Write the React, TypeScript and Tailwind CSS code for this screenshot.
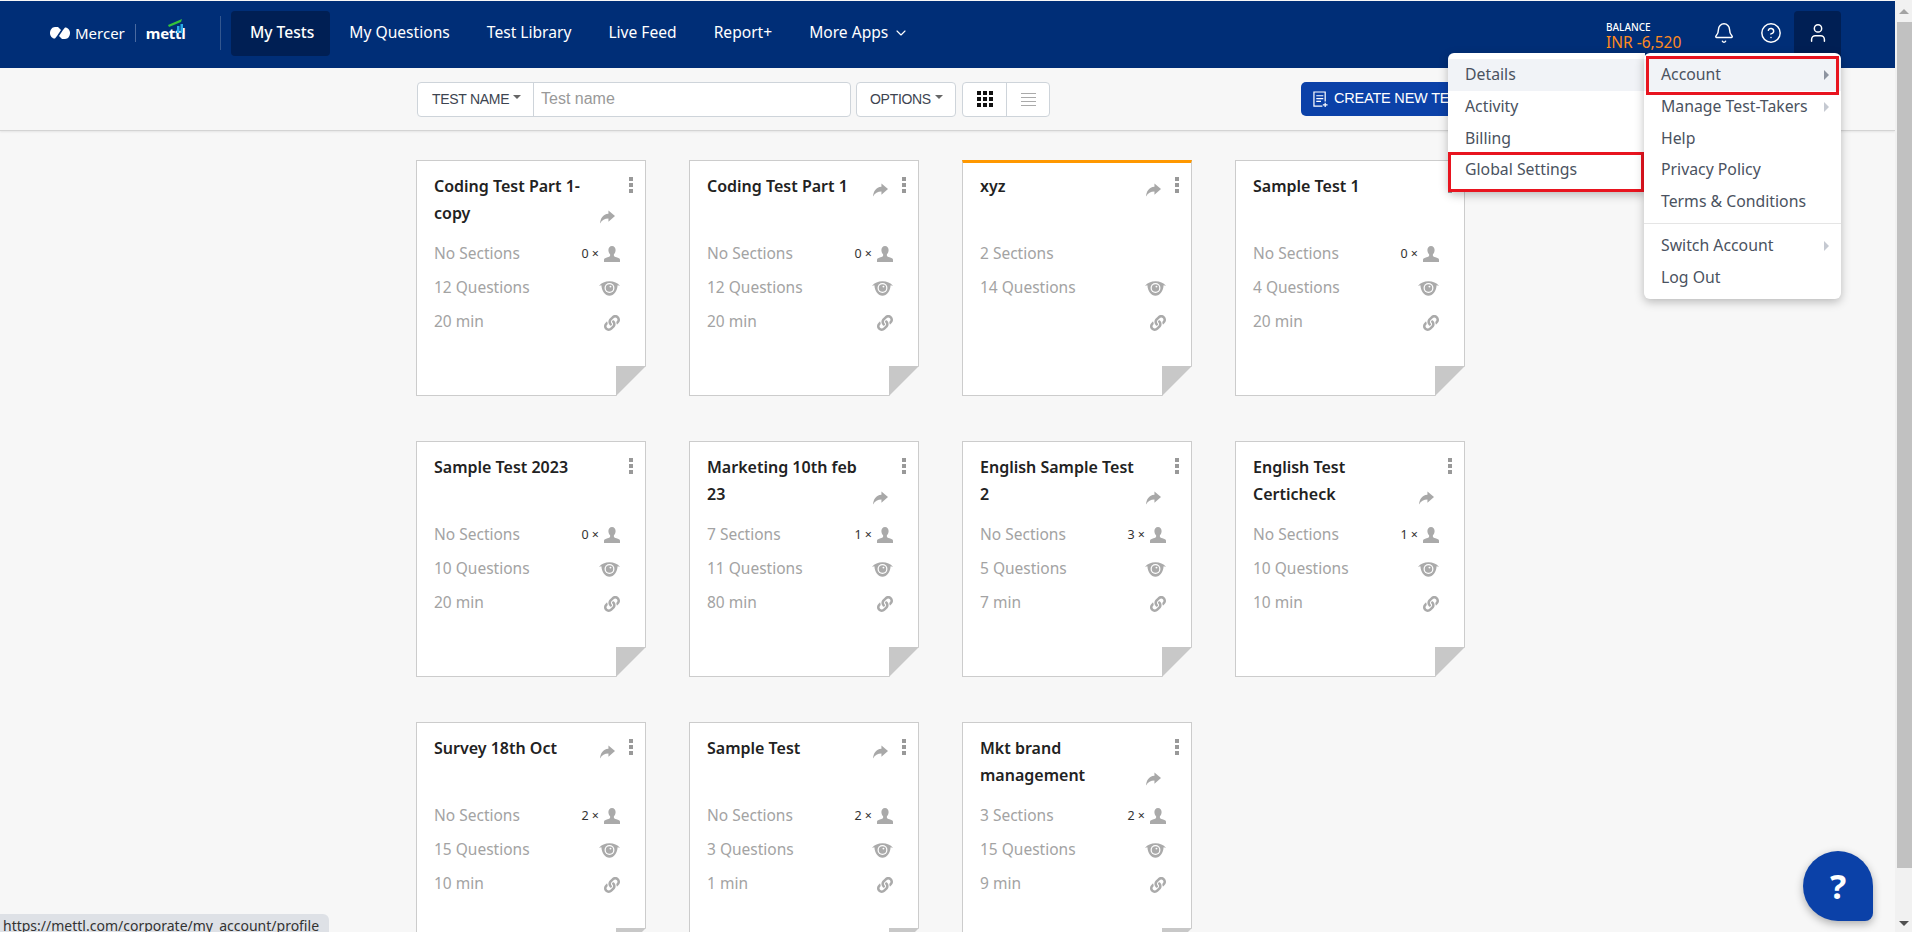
import { Bell, ChevronDown, CircleHelp, User } from "lucide-react";
import { FaLink } from "react-icons/fa";

interface TestCard {
  title: string;
  sections: string;
  takers?: number;
  questions: number;
  mins?: number;
  shared?: boolean;
  draft?: boolean;
}

const tests: TestCard[] = [
  { title: "Coding Test Part 1-copy", sections: "No Sections", takers: 0, questions: 12, mins: 20, shared: true },
  { title: "Coding Test Part 1", sections: "No Sections", takers: 0, questions: 12, mins: 20, shared: true },
  { title: "xyz", sections: "2 Sections", questions: 14, shared: true, draft: true },
  { title: "Sample Test 1", sections: "No Sections", takers: 0, questions: 4, mins: 20 },
  { title: "Sample Test 2023", sections: "No Sections", takers: 0, questions: 10, mins: 20 },
  { title: "Marketing 10th feb 23", sections: "7 Sections", takers: 1, questions: 11, mins: 80, shared: true },
  { title: "English Sample Test 2", sections: "No Sections", takers: 3, questions: 5, mins: 7, shared: true },
  { title: "English Test Certicheck", sections: "No Sections", takers: 1, questions: 10, mins: 10, shared: true },
  { title: "Survey 18th Oct", sections: "No Sections", takers: 2, questions: 15, mins: 10, shared: true },
  { title: "Sample Test", sections: "No Sections", takers: 2, questions: 3, mins: 1, shared: true },
  { title: "Mkt brand management", sections: "3 Sections", takers: 2, questions: 15, mins: 9, shared: true },
];

const navLinks = ["My Questions", "Test Library", "Live Feed", "Report+"];

function ShareIcon() {
  return (
    <svg viewBox="0 0 16 14" className="w-[15px] h-[14px] mb-[3px] fill-[#a8a8a8]">
      <path d="M9 0 16 6 9 12V8.500C5 8.500 2 10 0 14 .5 8.500 3 4 9 3.500Z" />
    </svg>
  );
}

function PersonIcon() {
  return (
    <svg viewBox="0 0 16 16" className="w-4 h-4 fill-[#aaaaaa]">
      <path d="M8 0c2.200 0 3.600 1.700 3.600 4 0 1.700-.7 3.300-1.700 4.200v1.500c0 .6 1 1 2.600 1.600 1.800.7 3.500 1.200 3.500 2.400V16H0v-2.300c0-1.200 1.700-1.700 3.500-2.400 1.600-.6 2.600-1 2.600-1.600V8.200C5.100 7.300 4.400 5.700 4.400 4c0-2.300 1.400-4 3.600-4Z" />
    </svg>
  );
}

function EyeIcon() {
  return (
    <svg viewBox="0 0 22 15" className="w-[21px] h-[15px] fill-[#aaaaaa]">
      <path d="M0 5C2.500 1.500 6.500 0 11 0s8.500 1.500 11 5c-1.300-.8-2-.9-2.500-.9C19 10.500 15.500 15 11 15S3 10.500 2.500 4.100C2 4.100 1.300 4.200 0 5Z" />
      <circle cx="11" cy="7" r="5.200" fill="#ffffff" />
      <circle cx="11" cy="7" r="3.900" />
      <circle cx="12" cy="5.500" r="1" fill="#ffffff" />
    </svg>
  );
}

function Card({ test }: { test: TestCard }) {
  return (
    <div
      className={`relative w-[230px] h-[236px] bg-white border border-[#cccccc] pl-[17px] pr-[12px] ${
        test.draft ? "border-t-[3px] border-t-[#ff9800] pt-[10px]" : "pt-[12px]"
      }`}
    >
      <div className="flex items-start h-[55px]">
        <div className="flex items-end w-[199px]">
          <div className="w-[166px] text-[16px] leading-[27px] font-semibold text-[#222222]">{test.title}</div>
          {test.shared && <ShareIcon />}
        </div>
        <div className="flex flex-col gap-[2px] mt-[4px] ml-auto">
          <span className="w-[4px] h-[4px] bg-[#999999]" />
          <span className="w-[4px] h-[4px] bg-[#999999]" />
          <span className="w-[4px] h-[4px] bg-[#999999]" />
        </div>
      </div>
      <div className="mt-[9px] w-[186px] text-[15.5px] text-[#a3a3a3]">
        <div className="flex items-center justify-between h-[34px]">
          <span>{test.sections}</span>
          {test.takers !== undefined && (
            <span className="flex items-center text-[12.5px] text-[#333333]">
              {test.takers} ×<span className="ml-[5px]"><PersonIcon /></span>
            </span>
          )}
        </div>
        <div className="flex items-center justify-between h-[34px]">
          <span>{test.questions} Questions</span>
          <EyeIcon />
        </div>
        <div className="flex items-center justify-between h-[34px]">
          <span>{test.mins !== undefined ? `${test.mins} min` : ""}</span>
          <FaLink className="w-4 h-4 mt-[1px] text-[#aaaaaa]" />
        </div>
      </div>
      <svg viewBox="0 0 30 30" className="absolute right-[-1px] bottom-[-1px] w-[30px] h-[30px]">
        <path d="M0 30 30 0V30Z" fill="#f7f7f7" />
        <path d="M0 0H30L0 30Z" fill="#c8c8c8" />
      </svg>
    </div>
  );
}

function MenuItem({ label, arrow, active }: { label: string; arrow?: boolean; active?: boolean }) {
  return (
    <div
      className={`flex items-center justify-between h-[31.6px] pt-px pl-[17px] pr-[12px] text-[15.8px] text-[#4a5260] ${
        active ? "bg-[#f1f3f7]" : ""
      }`}
    >
      <span>{label}</span>
      {arrow && (
        <span className={`w-0 h-0 border-y-[5px] border-y-transparent border-l-[5px] ${active ? "border-l-[#8d93a0]" : "border-l-[#c5c9d1]"}`} />
      )}
    </div>
  );
}

export default function App() {
  return (
    <div className="relative flex h-[932px] overflow-hidden bg-[#f7f7f7] [font-family:Noto_Sans,sans-serif]">
      <div className="flex-1 min-w-0">
        <header className="flex items-center h-[67px] mt-[1px] pb-[3px] bg-[#002e77] text-white">
          <div className="flex items-center w-[220px] pl-[50px]">
            <svg viewBox="0 0 20 12" className="w-[20px] h-[12px] fill-white">
              <path d="M5 0h3l3 3-4 6-2 2.600C2 11.600 0 9 0 6s2-6 5-6Z" />
              <path d="M15 12h-3L9 9l4-6 2-2.600c3 0 5 2.600 5 5.600s-2 6-5 6Z" />
            </svg>
            <span className="ml-[5px] text-[15px]">Mercer</span>
            <span className="w-px h-[18px] bg-[#4a6aa0] mx-[10px]" />
            <div className="relative">
              <span className="text-[15px] font-bold tracking-[-0.3px]">mettl</span>
              <svg viewBox="0 0 18 18" className="absolute right-[0px] top-[-5px] w-[18px] h-[18px]">
                <path d="M10 10h2.500v7H10zM13.500 8H16v9h-2.500z" fill="#29a9e8" />
                <path d="M1 9 15 3l-1 3L2 11Z" fill="#35c23a" />
              </svg>
            </div>
          </div>
          <span className="w-px h-[34px] bg-[#33578f]" />
          <nav className="flex items-center ml-[10px] text-[15.6px]">
            <a className="flex items-center h-[45px] pl-[19px] pr-[16px] rounded-[4px] bg-[#001f54] font-medium">My Tests</a>
            {navLinks.map((l) => (
              <a key={l} className="flex items-center h-[45px] px-[18px] ml-px">
                {l}
              </a>
            ))}
            <a className="flex items-center h-[45px] px-[18px] ml-px">
              More Apps
              <ChevronDown className="w-[16px] h-[16px] ml-[5px]" strokeWidth={1.700} />
            </a>
          </nav>
          <div className="ml-auto flex items-center pr-[54px]">
            <div className="w-[94px] mt-[6px]">
              <div className="text-[10px] leading-[11px] font-medium">BALANCE</div>
              <div className="text-[15.5px] leading-[16px] mt-[1px] text-[#ff8a1e]">INR -6,520</div>
            </div>
            <div className="w-[47px] flex justify-center"><Bell className="w-[22px] h-[22px]" strokeWidth={1.600} /></div>
            <div className="w-[47px] flex justify-center"><CircleHelp className="w-[22px] h-[22px]" strokeWidth={1.600} /></div>
            <div className="flex items-center justify-center w-[47px] h-[45px] rounded-t-[4px] bg-[#001f54]">
              <User className="w-[22px] h-[22px]" strokeWidth={1.600} />
            </div>
          </div>
        </header>
        <div className="flex items-center h-[63px] pl-[417px] bg-[#f7f7f7] border-b border-[#d4d4d4] shadow-[0_1px_2px_rgba(0,0,0,0.08)] [font-family:Liberation_Sans,Arial,sans-serif] text-[14px] text-[#3d4450]">
          <div className="flex w-[434px] h-[35px] bg-white border border-[#ced4da] rounded-[4px]">
            <div className="flex items-center w-[116px] pl-[14px] border-r border-[#ced4da] tracking-[-0.3px]">
              TEST NAME
              <span className="ml-[4px] mb-[4px] border-x-[4px] border-x-transparent border-t-[4px] border-t-[#666666]" />
            </div>
            <input placeholder="Test name" className="flex-1 min-w-0 pl-[7px] text-[16px] outline-none placeholder:text-[#999999]" />
          </div>
          <div className="flex items-center w-[100px] h-[35px] ml-[5px] pl-[13px] bg-white border border-[#ced4da] rounded-[4px] tracking-[-0.3px]">
            OPTIONS
            <span className="ml-[4px] mb-[4px] border-x-[4px] border-x-transparent border-t-[4px] border-t-[#666666]" />
          </div>
          <div className="flex w-[88px] h-[35px] ml-[6px] bg-white border border-[#ced4da] rounded-[4px]">
            <div className="flex items-center justify-center w-[44px] border-r border-[#ced4da]">
              <div className="grid grid-cols-3 gap-[2px]">
                {Array.from({ length: 9 }).map((_, i) => (
                  <span key={i} className="w-[4px] h-[4px] bg-[#111111]" />
                ))}
              </div>
            </div>
            <div className="flex flex-1 flex-col items-center justify-center gap-[3px]">
              {Array.from({ length: 4 }).map((_, i) => (
                <span key={i} className="w-[15px] h-px bg-[#aaaaaa]" />
              ))}
            </div>
          </div>
          <button className="flex items-center h-[34px] w-[170px] ml-[251px] pl-[12px] bg-[#0b41a8] text-white rounded-[5px] text-[14.5px] tracking-[-0.2px] whitespace-nowrap">
            <svg viewBox="0 0 16 18" className="w-[15px] h-[17px] mr-[6px] fill-none stroke-white stroke-[1.300]">
              <path d="M10 16H1V1h12v10" />
              <path d="M3.500 5h7.500M3.500 8h7.500M3.500 11h5M13 12.500v4.500M10.500 14.800h5" />
            </svg>
            CREATE NEW TEST
          </button>
        </div>
        <main className="grid grid-cols-[repeat(4,230px)] gap-x-[43px] gap-y-[45px] pt-[29px] pl-[416px]">
          {tests.map((t) => (
            <Card key={t.title} test={t} />
          ))}
        </main>
      </div>

      {/* scrollbar */}
      <div className="flex flex-col w-[17px] bg-[#f1f1f1]">
        <div className="flex items-center justify-center h-[22px]">
          <span className="border-x-[5px] border-x-transparent border-b-[5px] border-b-[#a3a3a3]" />
        </div>
        <div className="h-[846px] ml-[2px] bg-[#c1c1c1]" />
        <div className="flex items-end justify-center flex-1 pb-[6px]">
          <span className="border-x-[5px] border-x-transparent border-t-[5px] border-t-[#505050]" />
        </div>
      </div>

      {/* open account menu */}
      <div className="absolute left-[1448px] top-[53px] w-[197px] h-[139px] pt-[6px] bg-white rounded-l-[6px] shadow-[0_3px_10px_rgba(0,0,0,0.25)]">
        <MenuItem label="Details" active />
        <MenuItem label="Activity" />
        <MenuItem label="Billing" />
        <MenuItem label="Global Settings" />
        <div className="absolute left-0 top-[99px] w-[196px] h-[40px] border-[3px] border-[#e8141f]" />
      </div>
      <div className="absolute left-[1644px] top-[53px] w-[197px] h-[246px] pt-[6px] bg-white rounded-[6px] shadow-[0_3px_10px_rgba(0,0,0,0.25)]">
        <MenuItem label="Account" arrow active />
        <MenuItem label="Manage Test-Takers" arrow />
        <MenuItem label="Help" />
        <MenuItem label="Privacy Policy" />
        <MenuItem label="Terms & Conditions" />
        <div className="h-px my-[6px] bg-[#e5e5e5]" />
        <MenuItem label="Switch Account" arrow />
        <MenuItem label="Log Out" />
        <div className="absolute left-[2px] top-[3px] w-[193px] h-[39px] border-[3px] border-[#e8141f]" />
      </div>

      {/* link preview */}
      <div className="absolute left-0 bottom-0 w-[329px] h-[18px] pl-[3px] bg-[#dee1e6] rounded-tr-[6px] overflow-hidden text-[14px] leading-[24px] text-[#333333]">
        https://mettl.com/corporate/my_account/profile
      </div>

      {/* help button */}
      <button className="absolute left-[1803px] top-[851px] flex items-center justify-center w-[70px] h-[70px] rounded-[35px_35px_8px_35px] bg-[#0b41a8] text-white text-[34px] font-bold shadow-[0_3px_8px_rgba(0,0,0,0.3)]">
        ?
      </button>
    </div>
  );
}
